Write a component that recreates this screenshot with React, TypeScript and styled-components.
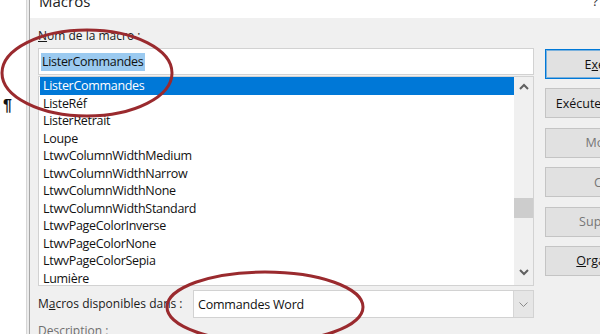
import React from "react";
import styled, { createGlobalStyle } from "styled-components";

const Global = createGlobalStyle`
  html, body { margin: 0; padding: 0; background: #fff; }
  body { font-family: "Open Sans", "Noto Sans", sans-serif; color: #000; }
`;

const Page = styled.div`
  position: relative;
  width: 600px;
  height: 334px;
  overflow: hidden;
  display: flex;
  background: #fff;
`;

const DocStrip = styled.div`
  width: 26px;
  flex: none;
  box-sizing: border-box;
  padding-top: 97px;
  background: #fff;
`;

const Pilcrow = styled.span`
  display: block;
  margin-left: 3px;
  font: bold 16px/18px "Liberation Sans", sans-serif;
  color: #111;
`;

const FrameEdge = styled.div`
  width: 4px;
  flex: none;
  background: linear-gradient(to right, #d6d6d6 0 1px, #ececec 1px 3px, #a8a8a8 3px);
`;

const Dialog = styled.div`
  flex: 1;
  min-width: 0;
  display: flex;
  flex-direction: column;
`;

const TitleBar = styled.div`
  flex: none;
  height: 18px;
  overflow: hidden;
  display: flex;
  justify-content: space-between;
  align-items: flex-start;
  padding-left: 9px;
  background: #fff;
`;

const Title = styled.span`
  margin-top: -9px;
  font-size: 15px;
  line-height: 20px;
  color: #222;
`;

const Help = styled.span`
  margin-top: -8px;
  margin-right: 2px;
  font-size: 13px;
  line-height: 18px;
  color: #333;
`;

const Body = styled.div`
  flex: 1;
  display: flex;
  align-items: flex-start;
  gap: 11px;
  padding: 10px 0 0 8px;
  background: #f0f0f0;
  overflow: hidden;
`;

const MainColumn = styled.div`
  width: 496px;
  flex: none;
  display: flex;
  flex-direction: column;
  & > * {
    flex-shrink: 0;
  }
`;

const Label = styled.div<{ $muted?: boolean }>`
  font-size: 12px;
  line-height: 16px;
  color: ${(p) => (p.$muted ? "#6e6e6e" : "#1a1a1a")};
  white-space: nowrap;
`;

const NameInput = styled.div`
  margin-top: 4px;
  height: 27px;
  box-sizing: border-box;
  display: flex;
  align-items: center;
  padding-left: 2px;
  background: #fff;
  border: 1px solid #d2d2d2;
`;

const Selected = styled.span`
  background: #9bcaf0;
  padding: 0 1px;
  font-size: 12.5px;
  letter-spacing: -0.3px;
  line-height: 18px;
  color: #111;
`;

const ListBox = styled.div`
  margin-top: 1px;
  height: 210px;
  box-sizing: border-box;
  display: flex;
  background: #fff;
  border: 1px solid #d2d2d2;
`;

const Items = styled.div`
  flex: 1;
  min-width: 0;
  overflow: hidden;
  padding: 0 0 0 1px;
`;

const Item = styled.div<{ $selected?: boolean }>`
  height: 17.5px;
  line-height: 17.5px;
  padding-left: 3px;
  font-size: 12.5px;
  letter-spacing: -0.3px;
  white-space: nowrap;
  background: ${(p) => (p.$selected ? "#0078d7" : "transparent")};
  color: ${(p) => (p.$selected ? "#fff" : "#111")};
`;

const ScrollBar = styled.div`
  width: 19px;
  flex: none;
  display: flex;
  flex-direction: column;
  background: #f0f0f0;
`;

const ScrollArrow = styled.div<{ $down?: boolean }>`
  height: 18px;
  flex: none;
  display: flex;
  justify-content: center;
  align-items: ${(p) => (p.$down ? "flex-start" : "center")};
  padding-top: ${(p) => (p.$down ? "2px" : "0")};
  box-sizing: border-box;
`;

const Track = styled.div`
  flex: 1;
  position: relative;
`;

const Thumb = styled.div`
  position: absolute;
  left: 0;
  right: 0;
  height: 20px;
  background: #cdcdcd;
`;

const SelectRow = styled.div`
  margin-top: 4px;
  display: flex;
  align-items: center;
  justify-content: space-between;
`;

const SelectBox = styled.div`
  width: 341px;
  height: 28px;
  box-sizing: border-box;
  display: flex;
  align-items: stretch;
  background: #fff;
  border: 1px solid #d2d2d2;
`;

const SelectValue = styled.span`
  flex: 1;
  display: flex;
  align-items: center;
  padding-left: 4px;
  font-size: 12.5px;
  letter-spacing: -0.2px;
  color: #111;
`;

const DropButton = styled.div`
  width: 19px;
  margin: 0 0 0 auto;
  display: flex;
  align-items: center;
  justify-content: center;
  background: #e6e6e6;
  border-left: 1px solid #d6d6d6;
`;

const Description = styled(Label)`
  margin-top: 5px;
`;

const ButtonColumn = styled.div`
  flex: none;
  display: flex;
  flex-direction: column;
  gap: 9.4px;
  padding-top: 21px;
`;

const Button = styled.div<{ $primary?: boolean; $disabled?: boolean }>`
  width: 130px;
  height: 30px;
  box-sizing: border-box;
  display: flex;
  align-items: center;
  justify-content: center;
  font-size: 12.5px;
  white-space: nowrap;
  background: #e1e1e1;
  border: 1px solid ${(p) => (p.$primary ? "#0078d7" : "#c4c4c4")};
  box-shadow: ${(p) => (p.$primary ? "inset 0 0 0 1px rgba(0,120,215,0.45)" : "none")};
  color: ${(p) => (p.$disabled ? "#767676" : "#111")};
`;

const Overlay = styled.svg`
  position: absolute;
  left: 0;
  top: 0;
  pointer-events: none;
`;

const items = [
  "ListerCommandes",
  "ListeRéf",
  "ListerRetrait",
  "Loupe",
  "LtwvColumnWidthMedium",
  "LtwvColumnWidthNarrow",
  "LtwvColumnWidthNone",
  "LtwvColumnWidthStandard",
  "LtwvPageColorInverse",
  "LtwvPageColorNone",
  "LtwvPageColorSepia",
  "Lumière",
  "MailMergeAskToConvertChar",
];

const ChevronUp = () => (
  <svg width="10" height="7" viewBox="0 0 10 7">
    <path d="M1 6 L5 2 L9 6" fill="none" stroke="#606060" strokeWidth="2" />
  </svg>
);

const ChevronDown = () => (
  <svg width="10" height="7" viewBox="0 0 10 7">
    <path d="M1 1 L5 5 L9 1" fill="none" stroke="#606060" strokeWidth="2" />
  </svg>
);

const ThinChevron = () => (
  <svg width="9" height="5" viewBox="0 0 9 5">
    <path d="M0.5 0.5 L4.5 4.5 L8.5 0.5" fill="none" stroke="#8a8a8a" strokeWidth="1" />
  </svg>
);

export default function App() {
  return (
    <>
      <Global />
      <Page>
        <DocStrip>
          <Pilcrow>¶</Pilcrow>
        </DocStrip>
        <FrameEdge />
        <Dialog>
          <TitleBar>
            <Title>Macros</Title>
            <Help>?</Help>
          </TitleBar>
          <Body>
            <MainColumn>
              <Label>
                <u>N</u>om de la macro :
              </Label>
              <NameInput>
                <Selected>ListerCommandes</Selected>
              </NameInput>
              <ListBox>
                <Items>
                  {items.map((it, i) => (
                    <Item key={it} $selected={i === 0}>
                      {it}
                    </Item>
                  ))}
                </Items>
                <ScrollBar>
                  <ScrollArrow>
                    <ChevronUp />
                  </ScrollArrow>
                  <Track>
                    <Thumb style={{ top: 103 }} />
                  </Track>
                  <ScrollArrow $down>
                    <ChevronDown />
                  </ScrollArrow>
                </ScrollBar>
              </ListBox>
              <SelectRow>
                <Label>
                  M<u>a</u>cros disponibles dans :
                </Label>
                <SelectBox>
                  <SelectValue>Commandes Word</SelectValue>
                  <DropButton>
                    <ThinChevron />
                  </DropButton>
                </SelectBox>
              </SelectRow>
              <Description $muted>Description :</Description>
            </MainColumn>
            <ButtonColumn>
              <Button $primary>
                E<u>x</u>écuter
              </Button>
              <Button>Exécuter pas à pas</Button>
              <Button $disabled>Modifier</Button>
              <Button $disabled>Créer</Button>
              <Button $disabled>Supprimer</Button>
              <Button>
                <u>O</u>rganiser...
              </Button>
            </ButtonColumn>
          </Body>
        </Dialog>
        <Overlay width="600" height="334" viewBox="0 0 600 334">
          <ellipse cx="87" cy="73" rx="85" ry="43" fill="none" stroke="#9a2a2e" strokeWidth="3" />
          <ellipse cx="265" cy="307" rx="98" ry="35" fill="none" stroke="#9a2a2e" strokeWidth="3" />
        </Overlay>
      </Page>
    </>
  );
}
